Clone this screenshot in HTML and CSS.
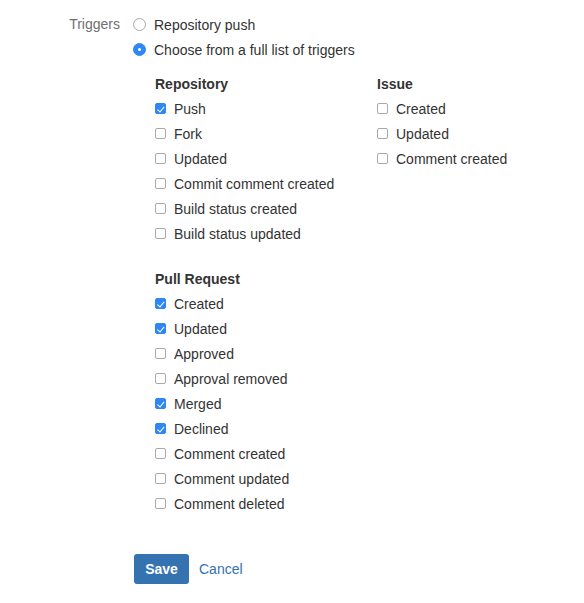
FILE: index.html
```html
<!DOCTYPE html>
<html>
<head>
<meta charset="utf-8">
<link rel="stylesheet" href="styles.css">
</head>
<body>
<form class="form">
  <div class="field">
    <div class="label">Triggers</div>
    <div class="control">
      <div class="row"><span class="radio"></span><span>Repository push</span></div>
      <div class="row"><span class="radio on"></span><span>Choose from a full list of triggers</span></div>
      <div class="groups">
        <div class="cols">
          <div class="group repo">
            <div class="head">Repository</div>
            <div class="row"><span class="cb on"></span><span>Push</span></div>
            <div class="row"><span class="cb"></span><span>Fork</span></div>
            <div class="row"><span class="cb"></span><span>Updated</span></div>
            <div class="row"><span class="cb"></span><span>Commit comment created</span></div>
            <div class="row"><span class="cb"></span><span>Build status created</span></div>
            <div class="row"><span class="cb"></span><span>Build status updated</span></div>
          </div>
          <div class="group">
            <div class="head">Issue</div>
            <div class="row"><span class="cb"></span><span>Created</span></div>
            <div class="row"><span class="cb"></span><span>Updated</span></div>
            <div class="row"><span class="cb"></span><span>Comment created</span></div>
          </div>
        </div>
        <div class="group pr">
          <div class="head">Pull Request</div>
          <div class="row"><span class="cb on"></span><span>Created</span></div>
          <div class="row"><span class="cb on"></span><span>Updated</span></div>
          <div class="row"><span class="cb"></span><span>Approved</span></div>
          <div class="row"><span class="cb"></span><span>Approval removed</span></div>
          <div class="row"><span class="cb on"></span><span>Merged</span></div>
          <div class="row"><span class="cb on"></span><span>Declined</span></div>
          <div class="row"><span class="cb"></span><span>Comment created</span></div>
          <div class="row"><span class="cb"></span><span>Comment updated</span></div>
          <div class="row"><span class="cb"></span><span>Comment deleted</span></div>
        </div>
      </div>
      <div class="buttons">
        <button type="button" class="save">Save</button>
        <a class="cancel" href="#">Cancel</a>
      </div>
    </div>
  </div>
</form>
</body>
</html>
```
FILE: styles.css
```css
html, body {
  margin: 0;
  background: #fff;
}
body {
  font-family: "Liberation Sans", Arial, sans-serif;
  font-size: 14px;
  color: #333;
  padding-top: 12px;
}
.field {
  display: flex;
}
.label {
  width: 120px;
  text-align: right;
  color: #707070;
  height: 25px;
  line-height: 25px;
  padding-right: 13px;
}
.control {
  display: flex;
  flex-direction: column;
}
.row {
  height: 25px;
  display: flex;
  align-items: center;
}
.radio {
  width: 11px;
  height: 11px;
  border: 1px solid #a9a9a9;
  border-radius: 50%;
  margin-right: 8px;
  box-sizing: content-box;
  position: relative;
  background: #fff;
}
.radio.on {
  background: #2f86f6;
  border-color: #2f86f6;
}
.radio.on::after {
  content: "";
  position: absolute;
  left: 4px;
  top: 4px;
  width: 3px;
  height: 3px;
  border-radius: 50%;
  background: #fff;
}
.groups {
  padding-left: 22px;
  padding-top: 10px;
}
.cols {
  display: flex;
}
.group.repo {
  width: 222px;
}
.group.pr {
  margin-top: 21px;
}
.head {
  height: 24px;
  line-height: 25px;
  font-weight: bold;
}
.cb {
  width: 9px;
  height: 9px;
  border: 1px solid #a9a9a9;
  border-radius: 2px;
  margin-right: 8px;
  position: relative;
  background: #fff;
}
.cb.on {
  background: #2f86f6;
  border-color: #2f86f6;
}
.cb.on::after {
  content: "";
  position: absolute;
  left: 2.5px;
  top: 0.5px;
  width: 2.5px;
  height: 5.5px;
  border: solid #fff;
  border-width: 0 1.5px 1.5px 0;
  transform: rotate(40deg);
}
.buttons {
  display: flex;
  align-items: center;
  margin-top: 38px;
  padding-left: 1px;
  gap: 10px;
}
.save {
  font-family: "Liberation Sans", Arial, sans-serif;
  font-size: 14px;
  font-weight: bold;
  color: #fff;
  background: #3572b0;
  border: none;
  border-radius: 3px;
  width: 55px;
  height: 30px;
  padding: 0;
}
.cancel {
  color: #3572b0;
  text-decoration: none;
}
```
